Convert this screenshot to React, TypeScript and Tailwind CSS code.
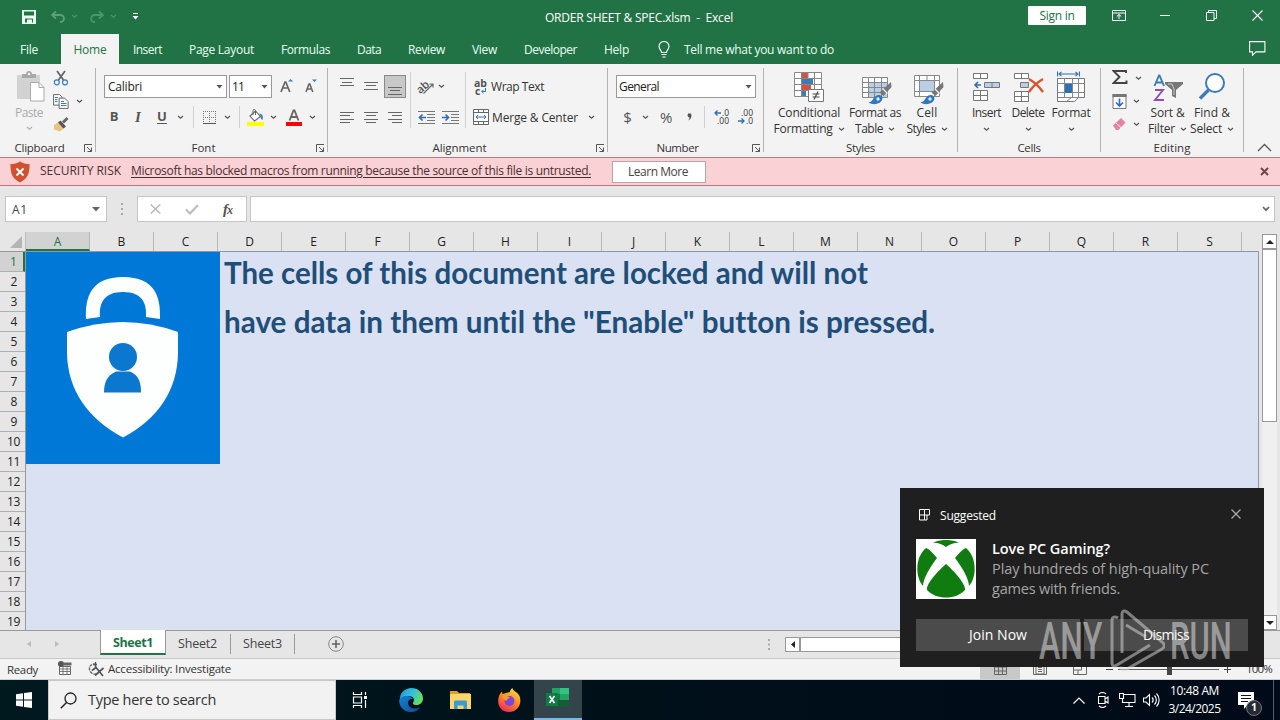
import React, { useLayoutEffect, useRef } from "react";

type TextProps = { w: number; className?: string; children: string };

/** Text set to a fixed width by adjusting its letter spacing. */
function T({ w, className = "", children }: TextProps) {
  const ref = useRef<HTMLSpanElement>(null);
  useLayoutEffect(() => {
    const el = ref.current;
    if (!el) return;
    el.style.letterSpacing = "0px";
    const natural = el.getBoundingClientRect().width;
    el.style.letterSpacing = `${(w - natural) / children.length}px`;
  }, [w, children]);
  return (
    <span ref={ref} className={`inline-block shrink-0 whitespace-pre ${className}`}>
      {children}
    </span>
  );
}

/** Text squeezed horizontally into a fixed width. */
function Squeezed({ w, className = "", children }: TextProps) {
  const ref = useRef<HTMLSpanElement>(null);
  useLayoutEffect(() => {
    const el = ref.current;
    if (!el) return;
    el.style.transform = `scaleX(${w / el.offsetWidth})`;
  }, [w, children]);
  return (
    <span ref={ref} className={`inline-block origin-left whitespace-pre [font-variant-ligatures:none] ${className}`}>
      {children}
    </span>
  );
}

type IconProps = { w: number; h: number; className?: string; children: React.ReactNode };
function Icon({ w, h, className = "", children }: IconProps) {
  return (
    <svg width={w} height={h} viewBox={`0 0 ${w} ${h}`} fill="none" className={`block shrink-0 ${className}`}>
      {children}
    </svg>
  );
}

function Chev({ className = "text-[#555]" }: { className?: string }) {
  return (
    <Icon w={7} h={5} className={className}>
      <path d="M1 1l2.5 2.3L6 1" stroke="currentColor" strokeWidth="1.2" />
    </Icon>
  );
}

function Down() {
  return (
    <Icon w={7} h={4}>
      <path d="M0.5 0h6l-3 3.6z" fill="#555" />
    </Icon>
  );
}

function Launcher() {
  return (
    <Icon w={9} h={9}>
      <path d="M.5 8V.5H8M3 3l4.500 4.500M7.500 3.500v4h-4" stroke="#555" />
    </Icon>
  );
}

function Cell({ className, children }: { className: string; children?: React.ReactNode }) {
  return <div className={`flex shrink-0 items-center justify-center ${className}`}>{children}</div>;
}

function Sep({ className = "h-[22px]" }: { className?: string }) {
  return <div className={`w-px shrink-0 bg-[#d0d0d0] ${className}`} />;
}

function Group({ className, label, labelWidth, launcher, children }: { className: string; label: string; labelWidth: number; launcher?: boolean; children: React.ReactNode }) {
  return (
    <section className={`flex shrink-0 ${className}`}>
      <div className="flex min-w-0 flex-1 flex-col">
        <div className="h-[76px]">{children}</div>
        <div className="flex h-[16px] items-center">
          <div className={`flex flex-1 justify-center ${launcher ? "pr-[5px]" : ""}`}>
            <T w={labelWidth} className="text-[11.5px] text-[#333]">{label}</T>
          </div>
          {launcher && <div className="mr-[2px] w-[9px]"><Launcher /></div>}
        </div>
      </div>
      <div className="mt-[4px] h-[84px] w-px bg-[#b4b4b4]" />
    </section>
  );
}

function TitleBar() {
  return (
    <header className="flex h-[33px] shrink-0 items-center text-white">
      <Icon w={14} h={14} className="ml-[22px]">
        <path d="M0 0h14v14H0zM2 1.5v4h10v-4zM3 8.5v4h2v-3h5v3h1v-4z" fill="#e9fff2" fillRule="evenodd" />
      </Icon>
      <Icon w={14} h={12} className="ml-[15px]">
        <path d="M5 0.5L1 4l4 3.5M1.5 4H9c5.5 0 5 7 0 7" stroke="#5d9f7b" strokeWidth="1.8" />
      </Icon>
      <Chev className="ml-[6px] text-[#4f946e]" />
      <Icon w={14} h={12} className="ml-[12px]">
        <path d="M9 0.5L13 4 9 7.500M12.5 4H5c-5.500 0-5 7 0 7" stroke="#4d946d" strokeWidth="1.8" />
      </Icon>
      <Chev className="ml-[6px] text-[#4f946e]" />
      <Icon w={7} h={7} className="ml-[15px]">
        <path d="M1 .5h5" stroke="#fff" />
        <path d="M.5 3h6l-3 3.500z" fill="#fff" />
      </Icon>
      <div className="mb-[1px] ml-[406px] w-[188px]"><T w={188} className="text-[12px] leading-[16px]">ORDER SHEET &amp; SPEC.xlsm  -  Excel</T></div>
      <div className="mb-[2px] ml-[295px] flex h-[19px] w-[58px] items-center justify-center rounded-[1px] bg-white">
        <T w={35} className="text-[12px] text-[#217346]">Sign in</T>
      </div>
      <Icon w={14} h={11} className="mb-[3px] ml-[26px]">
        <path d="M.5.5h13v10H.5zM.5 3h13M7 9V4.500M4.800 6.500L7 4.400l2.200 2.100" stroke="#fff" />
      </Icon>
      <div className="mb-[3px] ml-[34px] h-px w-[10px] bg-white" />
      <Icon w={11} h={11} className="mb-[2px] ml-[36px]">
        <path d="M.5 2.500h7.500V10.500H.5zM2.500 2.500V.5h8v8H8" stroke="#fff" />
      </Icon>
      <Icon w={11} h={11} className="mb-[3px] ml-[35px]">
        <path d="M.5.5l10 10M10.500.5l-10 10" stroke="#fff" strokeWidth="1.100" />
      </Icon>
    </header>
  );
}

function Tab({ className, w, children }: { className: string; w: number; children: string }) {
  return (
    <div className={`h-[30px] shrink-0 pt-[1px] ${className}`}>
      <T w={w} className="text-[12px] leading-[29px]">{children}</T>
    </div>
  );
}

function Tabs() {
  return (
    <nav className="flex h-[31px] shrink-0 items-end pl-[20px] text-[#e8fff2]">
      <Tab className="w-[41px]" w={18}>File</Tab>
      <div className="flex h-[30px] w-[58px] shrink-0 justify-center bg-[#f3f3f3] pt-[1px] text-[#217346]"><T w={33} className="text-[12px] leading-[29px]">Home</T></div>
      <Tab className="w-[56px] pl-[14px]" w={29}>Insert</Tab>
      <Tab className="w-[92px] pl-[14px]" w={65}>Page Layout</Tab>
      <Tab className="w-[76px] pl-[14px]" w={49}>Formulas</Tab>
      <Tab className="w-[51px] pl-[14px]" w={24}>Data</Tab>
      <Tab className="w-[64px] pl-[14px]" w={37}>Review</Tab>
      <Tab className="w-[52px] pl-[14px]" w={25}>View</Tab>
      <Tab className="w-[80px] pl-[14px]" w={53}>Developer</Tab>
      <Tab className="w-[68px] pl-[14px]" w={25}>Help</Tab>
      <Icon w={12} h={17} className="mb-[6px]">
        <path d="M3.500 11.500C3.500 9 1 8.500 1 5.500a5 5 0 0 1 10 0c0 3-2.500 3.500-2.500 6zM3.500 13.500h5M4.500 16h3" stroke="#fff" strokeWidth="1.100" />
      </Icon>
      <Tab className="ml-[14px]" w={150}>Tell me what you want to do</Tab>
      <Icon w={17} h={15} className="mb-[8px] ml-[415px]">
        <path d="M.6.6h15.300v10.300H7l-3.500 3.300v-3.300H.6z" stroke="#fff" strokeWidth="1.100" />
      </Icon>
    </nav>
  );
}

function Clipboard() {
  return (
    <Group className="w-[96px]" label="Clipboard" labelWidth={50} launcher>
      <div className="flex">
        <div className="ml-[12px] flex w-[34px] flex-col items-center pt-[7px]">
          <Icon w={29} h={31} className="ml-[3px]">
            <path d="M1 4h23v24H1z" fill="#d2d2d2" />
            <path d="M6 3h4c0-4 6-4 6 0h4v4H6z" fill="#a8a8a8" />
            <circle cx="13" cy="3" r="1.200" fill="#f3f3f3" />
            <path d="M14.500 11.500h8.500l5 5V30H14.500z" fill="#fff" stroke="#aaa" />
            <path d="M23 11.500v5h5" stroke="#aaa" />
          </Icon>
          <T w={28} className="mt-[3px] text-[12px] leading-[16px] text-[#aaa]">Paste</T>
          <div className="mt-[5px]"><Chev className="text-[#b0b0b0]" /></div>
        </div>
        <div className="ml-[7px] w-[16px] pt-[6px]">
          <Icon w={16} h={16}>
            <path d="M4 1l6.500 9M12 1L5.500 10" stroke="#666" strokeWidth="1.800" />
            <circle cx="3.800" cy="12.300" r="2.500" stroke="#3c7ab8" strokeWidth="1.200" />
            <circle cx="12" cy="12.300" r="2.500" stroke="#3c7ab8" strokeWidth="1.200" />
          </Icon>
          <Icon w={16} h={15} className="mt-[8px]">
            <path d="M.6.6h6l2.500 2.500v8H.6z" fill="#fff" stroke="#666" />
            <path d="M6.100 4.100h5.500l3.500 3.500v6.800h-9z" fill="#fff" stroke="#666" />
            <path d="M2 3.500h3M2 5.500h2.500M2 7.500h2.500M8 7.500h3M8 9.500h5.500M8 11.500h5.500" stroke="#3c7ab8" />
          </Icon>
          <Icon w={16} h={15} className="mt-[8px]">
            <path d="M1 8l5-3 5 6-4 3.500-6-2z" fill="#eac282" />
            <path d="M5 5.500l2.500-2 5.500 6-2.500 2z" fill="#555" />
            <path d="M10 5.500L14.500 1" stroke="#666" strokeWidth="2.800" />
          </Icon>
        </div>
        <div className="ml-[7px] pt-[35px]"><Chev /></div>
      </div>
    </Group>
  );
}

function FontGroup() {
  return (
    <Group className="w-[232px]" label="Font" labelWidth={24} launcher>
      <div className="flex pl-[8px] pt-[11px]">
        <div className="flex h-[23px] w-[123px] items-center justify-between border border-[#999] bg-white pl-[3px] pr-[3px] text-[#222]">
          <T w={34} className="text-[12px]">Calibri</T><Down />
        </div>
        <div className="ml-[2px] flex h-[23px] w-[43px] items-center justify-between border border-[#999] bg-white pl-[2px] pr-[3px] text-[#222]">
          <T w={12} className="text-[12px]">11</T><Down />
        </div>
        <Icon w={14} h={16} className="ml-[8px] mt-[3px]">
          <path d="M1 14L5 4h.8l4 10M2.600 10h5.800" stroke="#666" strokeWidth="1.700" />
          <path d="M8 3.500L10.600 1l2.600 2.500z" fill="#3c7ab8" />
        </Icon>
        <Icon w={14} h={16} className="ml-[11px] mt-[3px]">
          <path d="M1 14l3-8h.8l3 8M2.200 11h4.500" stroke="#666" strokeWidth="1.600" />
          <path d="M7 1.500h5L9.500 4z" fill="#3c7ab8" />
        </Icon>
      </div>
      <div className="mt-[8px] flex h-[22px] items-center pl-[8px] text-[#555]">
        <Cell className="w-[20px] text-[13px] font-bold">B</Cell>
        <Cell className="w-[28px] font-['Liberation_Serif',serif] text-[15px] font-bold italic">I</Cell>
        <Cell className="w-[20px] text-[13px] font-bold underline underline-offset-2">U</Cell>
        <Cell className="w-[17px]"><Chev /></Cell>
        <Cell className="w-[9px]"><Sep /></Cell>
        <Cell className="w-[22px]">
          <Icon w={13} h={13}>
            <path d="M.5 0v12M6.500 0v12M12.500 0v12M0 .5h13M0 6.500h13" stroke="#777" strokeDasharray="1 1" />
            <path d="M0 12.500h13" stroke="#555" />
          </Icon>
        </Cell>
        <Cell className="w-[14px]"><Chev /></Cell>
        <Cell className="w-[11px]"><Sep /></Cell>
        <Cell className="w-[22px] pr-[2px]">
          <Icon w={17} h={17}>
            <path d="M3 7l5.500-5 5 5.500L7.500 12z" fill="#fff" stroke="#666" strokeWidth="1.100" />
            <path d="M6 6V1.500c0-1.500 2.500-1.500 2.500 0V6" stroke="#666" />
            <path d="M12.500 4.500c3 .5 4 3 3 6.500-1.500-1-2-2-2-4z" fill="#3c7ab8" />
            <path d="M0 13h17v4H0z" fill="#ffff00" />
          </Icon>
        </Cell>
        <Cell className="w-[13px]"><Chev /></Cell>
        <Cell className="w-[26px] pl-[2px]">
          <Icon w={16} h={17}>
            <path d="M3.500 11.500L7.500 1.500h1l4 10M5 8h6" stroke="#666" strokeWidth="1.800" />
            <path d="M0 13h16v4H0z" fill="#f00" />
          </Icon>
        </Cell>
        <Cell className="w-[12px]"><Chev /></Cell>
      </div>
    </Group>
  );
}

function Alignment() {
  return (
    <Group className="w-[280px]" label="Alignment" labelWidth={54} launcher>
      <div className="flex">
        <div className="w-[82px] pt-[11px]">
          <div className="flex h-[23px] pl-[7px]">
            <Cell className="w-[24px]"><Icon w={14} h={23}><path d="M0 3.500h14M2 7.500h10M0 10.500h14" stroke="#666" /></Icon></Cell>
            <Cell className="w-[24px]"><Icon w={14} h={23}><path d="M0 7.500h14M2 10.500h10M0 14.500h14" stroke="#666" /></Icon></Cell>
            <Cell className="ml-px w-[22px] border border-[#8a8a8a] bg-[#c8c8c8]"><Icon w={14} h={21}><path d="M0 11.500h14M2 14.500h10M0 18.500h14" stroke="#666" /></Icon></Cell>
          </div>
          <div className="mt-[8px] flex h-[22px] pl-[7px]">
            <Cell className="w-[24px]"><Icon w={14} h={11}><path d="M0 .5h14M0 3.500h10M0 7.500h14M0 10.500h10" stroke="#666" /></Icon></Cell>
            <Cell className="w-[24px]"><Icon w={14} h={11}><path d="M0 .5h14M2 3.500h10M0 7.500h14M2 10.500h10" stroke="#666" /></Icon></Cell>
            <Cell className="w-[24px]"><Icon w={14} h={11}><path d="M0 .5h14M4 3.500h10M0 7.500h14M4 10.500h10" stroke="#666" /></Icon></Cell>
          </div>
        </div>
        <div className="pt-[8px]"><Sep className="h-[56px]" /></div>
        <div className="w-[54px] pt-[11px]">
          <div className="flex h-[23px] items-center pl-[7px]">
            <Icon w={17} h={16} className="overflow-visible">
              <text x="-1" y="11" transform="rotate(-42 6 9)" fill="#555" className="text-[11px] font-semibold">ab</text>
              <path d="M5.500 14.500L15 5M11.500 5H15v3.500" stroke="#666" strokeWidth="1.200" />
            </Icon>
            <div className="ml-[3px]"><Chev /></div>
          </div>
          <div className="mt-[8px] flex h-[22px] items-center pl-[7px]">
            <Icon w={17} h={13}>
              <path d="M0 .5h17M9 3.500h8M9 6.500h8M9 9.500h8M0 12.500h17" stroke="#777" />
              <path d="M8 6.500H1.500M4.500 3.500l-3 3 3 3" stroke="#2f6fb3" strokeWidth="1.700" />
            </Icon>
            <Icon w={17} h={13} className="ml-[7px]">
              <path d="M0 .5h17M9 3.500h8M9 6.500h8M9 9.500h8M0 12.500h17" stroke="#777" />
              <path d="M0 6.500h6.500M3.500 3.500l3 3-3 3" stroke="#2f6fb3" strokeWidth="1.700" />
            </Icon>
          </div>
        </div>
        <div className="pt-[8px]"><Sep className="h-[56px]" /></div>
        <div className="pl-[7px] pt-[11px] text-[#333]">
          <div className="flex h-[23px] items-center">
            <div className="ml-[1px] flex w-[14px] flex-col text-[10.5px] font-bold leading-[8px] text-[#555]">
              <span>ab</span>
              <span className="flex items-center gap-[1px] pl-px">c<Icon w={5} h={6}><path d="M4.500 0v3.500H.8M2.500 1.800L.8 3.500l1.700 1.700" stroke="#2f6fb3" /></Icon></span>
            </div>
            <T w={53} className="ml-[3px] text-[12px]">Wrap Text</T>
          </div>
          <div className="mt-[8px] flex h-[22px] items-center">
            <Icon w={16} h={16}>
              <path d="M.5.5h15v15H.5z" fill="#fff" stroke="#666" />
              <path d="M.5 3.500h15M.5 12.500h15M5.500.5v3M10.500.5v3M5.500 12.500v3M10.500 12.500v3" stroke="#666" />
              <path d="M3 8h10M5 6L3 8l2 2M11 6l2 2-2 2" stroke="#2f6fb3" />
            </Icon>
            <T w={86} className="ml-[3px] mt-[2px] text-[12px]">Merge &amp; Center</T>
            <div className="ml-[10px]"><Chev /></div>
          </div>
        </div>
      </div>
    </Group>
  );
}

function NumberGroup() {
  return (
    <Group className="w-[156px]" label="Number" labelWidth={42} launcher>
      <div className="ml-[8px] flex pt-[11px]">
        <div className="flex h-[23px] w-[140px] items-center justify-between border border-[#999] bg-white pl-[2px] pr-[3px] text-[#222]">
          <T w={40} className="text-[12px]">General</T><Down />
        </div>
      </div>
      <div className="mt-[8px] flex h-[22px] items-center pl-[8px] text-[#555]">
        <Cell className="w-[23px] text-[15px]">$</Cell>
        <Cell className="w-[14px] pr-[2px]"><Chev /></Cell>
        <Cell className="w-[27px] text-[15px]"><T w={13}>%</T></Cell>
        <Cell className="w-[19px]">
          <Icon w={5} h={8}><path d="M.5 2.300a2 2 0 1 1 4 0C4.500 5 3 7 1 7.600c1-1.200 1.500-2 1.500-3C1.500 4.600.5 3.500.5 2.300z" fill="#555" /></Icon>
        </Cell>
        <Cell className="w-[11px]"><Sep /></Cell>
        <div className="ml-[3px] flex w-[16px] shrink-0 flex-col items-end text-[8.5px] leading-[8px] text-[#333]">
          <span className="flex items-center gap-px"><Icon w={7} h={6}><path d="M7 3H1M3.500.5L1 3l2.500 2.500" stroke="#2f6fb3" strokeWidth="1.300" /></Icon>.0</span>
          <span>.00</span>
        </div>
        <div className="ml-[8px] flex w-[16px] shrink-0 flex-col items-end text-[8.5px] leading-[8px] text-[#333]">
          <span>.00</span>
          <span className="flex items-center gap-px"><Icon w={7} h={6}><path d="M0 3h6M3.500.5L6 3 3.500 5.500" stroke="#2f6fb3" strokeWidth="1.300" /></Icon>.0</span>
        </div>
      </div>
    </Group>
  );
}

function Big({ className, icon, a, aw, b, bw }: { className: string; icon: React.ReactNode; a: string; aw: number; b?: string; bw?: number }) {
  return (
    <div className={`flex shrink-0 flex-col items-center text-[#333] ${className}`}>
      <div className="flex h-[40px] items-end">{icon}</div>
      <T w={aw} className="text-[12px] leading-[16px]">{a}</T>
      <div className="flex h-[16px] items-center gap-[5px]">
        {b && bw && <T w={bw} className="text-[12px] leading-[16px]">{b}</T>}
        <Chev />
      </div>
    </div>
  );
}

function BrushMark() {
  return (
    <>
      <path d="M29 8l.5 5-8 9-4-3.500z" fill="#777" />
      <path d="M21 15l4.500 4.500" stroke="#f3f3f3" strokeWidth="1.200" />
      <path d="M6.500 28.500c5-.5 5-8 11-7.500 4 1 3.500 5 1 7-3 2.500-8 3-12 .5z" fill="#2f78bd" />
      <circle cx="16" cy="25" r="1.700" fill="#dcebf8" />
    </>
  );
}

function Styles() {
  return (
    <Group className="w-[194px]" label="Styles" labelWidth={29}>
      <div className="flex pl-[8px] pt-[1px]">
        <Big className="w-[74px]" a="Conditional" aw={62} b="Formatting" bw={59} icon={
          <Icon w={30} h={31} className="mb-[2px]">
            <path d="M.5.5h27v25H.5z" fill="#fff" />
            <path d="M8 1h6v6H8zM8 13h9v6H8z" fill="#d6503f" />
            <path d="M8 7h11v6H8zM8 19h4v6H8z" fill="#3c7ab8" />
            <path d="M.5.5h27v24H.5zM.5 6.500h27M.5 12.500h27M.5 18.500h27M7.500.5v24M20.500.5v24M14 .5v6" stroke="#888" />
            <path d="M14.500 17.500h15v12h-15z" fill="#fff" stroke="#777" />
            <path d="M18.500 22h7M18.500 25h7M24 19.500l-4 8" stroke="#444" strokeWidth="1.200" />
          </Icon>} />
        <Big className="w-[58px]" a="Format as" aw={52} b="Table" bw={28} icon={
          <Icon w={30} h={31} className="ml-[3px]">
            <path d="M.5 3.500h25v20H.5z" fill="#fff" />
            <path d="M7 8h18v15H7z" fill="#b9cfe6" />
            <path d="M.5 3.500h25v20H.5zM.5 8.500h25M.5 13.500h25M.5 18.500h25M6.500 3.500v20M12.500 3.500v20M19.500 3.500v20" stroke="#888" />
            <BrushMark />
          </Icon>} />
        <Big className="w-[46px]" a="Cell" aw={21} b="Styles" bw={29} icon={
          <Icon w={30} h={31} className="ml-[4px]">
            <path d="M.5 1.500h25v21H.5z" fill="#fff" />
            <path d="M5 7h16v10H5z" fill="#b9cfe6" />
            <path d="M.5 1.500h25v21H.5zM.5 6.500h25M.5 17.500h25M5.500 1.500v21M20.500 1.500v21M13 1.500v5" stroke="#888" />
            <BrushMark />
          </Icon>} />
      </div>
    </Group>
  );
}

function Cells() {
  return (
    <Group className="w-[143px]" label="Cells" labelWidth={23}>
      <div className="flex pl-[9px] pt-[1px]">
        <Big className="w-[39px]" a="Insert" aw={29} icon={
          <Icon w={27} h={29} className="mb-[3px]">
            <path d="M.5.5h14v5H.5zM7.500.5v5M.5 17.500h14v10H.5zM7.500 17.500v10M.5 22.500h14" fill="#fff" stroke="#777" />
            <path d="M11.500 9.500h15v5h-15zM19 9.500v5" fill="#b9cfe6" stroke="#777" />
            <path d="M8 12H2M5 9l-3 3 3 3" stroke="#2f6fb3" strokeWidth="1.600" />
          </Icon>} />
        <Big className="w-[44px]" a="Delete" aw={33} icon={
          <Icon w={31} h={30} className="mb-[2px] ml-[3px]">
            <path d="M.5.5h14v5H.5zM7.500.5v5M.5 18.500h14v10H.5zM7.500 18.500v10M.5 23.500h14" fill="#fff" stroke="#777" />
            <path d="M6.500 9.500h8v5h-8z" fill="#b9cfe6" stroke="#777" />
            <path d="M15 6c5 3 9 6 14 13M29 6c-5 3-10 7-14 13" stroke="#d9532f" strokeWidth="2.400" />
          </Icon>} />
        <Big className="w-[42px]" a="Format" aw={39} icon={
          <Icon w={29} h={32} className="mb-[2px]">
            <path d="M.5.5v5M22.500.5v5M2 3h19M4.500.8L2 3l2.500 2.200M18.500.8L21 3l-2.500 2.200" stroke="#2f6fb3" strokeWidth="1.100" />
            <path d="M.5 7.500h27v19h-6l-4 4H.5z" fill="#fff" stroke="#777" />
            <path d="M.5 12.500h27M.5 21.500h27M7.500 7.500v19M15.500 7.500v19M21.500 7.500v19M1 26.500h20M10 30l4-3" stroke="#888" />
            <path d="M8 13h7v9H8z" fill="#2f6fb3" />
          </Icon>} />
      </div>
    </Group>
  );
}

function Editing() {
  return (
    <Group className="w-[143px]" label="Editing" labelWidth={37}>
      <div className="flex pl-[11px] pt-[1px]">
        <div className="w-[32px] pt-[5px]">
          <div className="flex items-center"><Icon w={16} h={14}><path d="M14 3V1H1.500l6 6-6 6H14.500v-2.500" stroke="#444" strokeWidth="1.900" /></Icon><div className="ml-[7px] mt-[2px]"><Chev /></div></div>
          <div className="mt-[10px] flex items-center"><Icon w={15} h={15}><path d="M1 .5h13v14H1z" fill="#fff" stroke="#777" /><path d="M.5 0h14v3H.5z" fill="#777" /><path d="M7.500 4.500v7M4 8.500l3.500 3.500L11 8.500" stroke="#2f6fb3" strokeWidth="1.700" /></Icon><div className="ml-[6px]"><Chev /></div></div>
          <div className="mt-[7px] flex items-center"><Icon w={15} h={15}><path d="M1 9.500L9 2l4.500 4.500L6.500 14H4z" fill="#e2849d" /><path d="M4 7l5 4.500" stroke="#f3f3f3" /></Icon><div className="ml-[6px] mt-[2px]"><Chev /></div></div>
        </div>
        <Big className="w-[47px]" a="Sort &amp;" aw={34} b="Filter" bw={27} icon={<SortIcon />} />
        <Big className="w-[42px]" a="Find &amp;" aw={36} b="Select" bw={32} icon={
          <Icon w={28} h={28} className="mb-[4px]">
            <circle cx="17" cy="10" r="9" fill="#fff" stroke="#3c7ab8" strokeWidth="2" />
            <path d="M10.500 17L2 25.500" stroke="#3c7ab8" strokeWidth="3.400" />
          </Icon>} />
      </div>
    </Group>
  );
}

function SortIcon() {
  return (
    <Icon w={30} h={28} className="mb-[3px]">
      <path d="M1.500 12L6 1.500h.5L11 12M3 8.500h6.500" stroke="#3c7ab8" strokeWidth="1.900" />
      <path d="M2 16h8L2 26h9" stroke="#8f4fb0" strokeWidth="1.900" />
      <path d="M12 8h18v2l-7 6v8l-4-2v-6l-7-6z" fill="#777" />
      <path d="M15 10h4l2 5v6" stroke="#ccc" />
    </Icon>
  );
}

function SecurityBar() {
  return (
    <div className="flex h-[29px] shrink-0 items-center border-y border-t-[#b87c80] border-b-[#d0707a] bg-[#fad1d4] text-[#4a2f31]">
      <Icon w={20} h={22} className="ml-[10px]">
        <path d="M10 .5c3 2 6 2.500 9.500 2.500 0 9-1 14-9.500 18.500C1.500 17 .5 12 .5 3 4 3 7 2.500 10 .5z" fill="#d1502f" />
        <path d="M6.500 7.500l7 7M13.500 7.500l-7 7" stroke="#fff" strokeWidth="2" />
      </Icon>
      <div className="mb-[1px] ml-[10px] flex w-[91px]"><T w={81} className="text-[12px] leading-[16px]">SECURITY RISK</T></div>
      <div className="mb-[1px] flex w-[481px]"><T w={460} className="text-[12px] leading-[16px] underline underline-offset-2">Microsoft has blocked macros from running because the source of this file is untrusted.</T></div>
      <div className="flex h-[22px] w-[94px] items-center justify-center border border-[#b9a5a7] bg-white pr-[2px]"><T w={60} className="text-[12px] text-[#444]">Learn More</T></div>
      <Icon w={9} h={9} className="ml-[554px]"><path d="M1 1l7 7M8 1L1 8" stroke="#6b4a4d" strokeWidth="2" /></Icon>
    </div>
  );
}

function FormulaBar() {
  return (
    <div className="flex h-[46px] shrink-0 items-center bg-[#e6e6e6] pl-[5px]">
      <div className="flex h-[26px] w-[102px] items-center justify-between border border-[#c6c6c6] bg-white pl-[6px] pr-[6px] text-[#444]">
        <T w={16} className="mt-[2px] text-[12px]">A1</T>
        <Icon w={8} h={5}><path d="M0 0h8L4 4.500z" fill="#666" /></Icon>
      </div>
      <Icon w={2} h={12} className="ml-[14px]"><path d="M0 0h2v2H0zM0 5h2v2H0zM0 10h2v2H0z" fill="#aaa" /></Icon>
      <div className="ml-[14px] flex h-[26px] w-[110px] items-center border border-[#c6c6c6] bg-white pl-[12px]">
        <Icon w={11} h={10}><path d="M.8.5l9.500 9M10.200.5L.8 9.500" stroke="#bbb" strokeWidth="1.600" /></Icon>
        <Icon w={14} h={11} className="ml-[24px]"><path d="M1 5.500L5 9.500 13 1" stroke="#bbb" strokeWidth="2" /></Icon>
        <span className="ml-[24px] w-[14px] font-['Liberation_Serif',serif] text-[15px] font-bold italic leading-[18px] tracking-[-1px] text-[#555]">f<span className="text-[12px]">x</span></span>
      </div>
      <div className="ml-[3px] flex h-[26px] w-[1025px] items-center justify-end border border-[#c6c6c6] bg-white pr-[4px]">
        <Icon w={8} h={6}><path d="M1 1l3 3.200L7 1" stroke="#666" strokeWidth="1.800" /></Icon>
      </div>
    </div>
  );
}

const columns = "ABCDEFGHIJKLMNOPQRS".split("");
const rows = Array.from({ length: 19 }, (_, i) => i + 1);

function LockPicture() {
  return (
    <Icon w={194} h={212}>
      <path d="M0 0h194v212H0z" fill="#0078d7" />
      <path d="M60 67C59 45 65 25 97 25s38 20 37 42l-14-2c1-14-4-25-23-25S73 51 74 65z" fill="#fdfefe" />
      <path d="M41 80Q97 60 152 80v20C152 138 131 168 97 185.500 63 168 41 138 41 100z" fill="#fdfefe" />
      <circle cx="97" cy="105" r="14" fill="#0b77cf" />
      <path d="M78 140.500c0-10 3-17 12-21h14c9 4 11 11 11 21z" fill="#0b77cf" />
    </Icon>
  );
}

function Sheet() {
  return (
    <div className="flex h-[398px] shrink-0 bg-[#e6e6e6]">
      <div className="flex w-[1259px] shrink-0 flex-col">
        <div className="flex h-[19px] shrink-0">
          <div className="flex w-[26px] shrink-0 items-end justify-end border-r border-[#bbb] pb-[3px] pr-[3px]">
            <Icon w={12} h={12}><path d="M12 0v12H0z" fill="#b4b4b4" /></Icon>
          </div>
          {columns.map((c) => (
            <div key={c} className={`flex w-[64px] shrink-0 items-center justify-center border-r border-[#b8b8b8] text-[12px] leading-[18px] ${c === "A" ? "border-b-2 border-b-[#217346] bg-[#d2d2d2] pt-[2px] text-[#217346]" : "text-[#222]"}`}>{c}</div>
          ))}
        </div>
        <div className="flex h-[379px] overflow-hidden">
          <div className="w-[26px] shrink-0 overflow-hidden border-t border-r border-[#999]">
            {rows.map((r) => (
              <div key={r} className={`flex h-[20px] items-center justify-center border-b border-[#b0b0b0] pt-[1px] text-[12px] leading-[18px] ${r === 1 ? "border-r-2 border-r-[#217346] bg-[#d2d2d2] pl-[3px] text-[#217346]" : "pl-[2px] text-[#222]"}`}><T w={r > 9 ? 13 : 6}>{String(r)}</T></div>
            ))}
          </div>
          <div className="flex flex-1 border-t border-r border-[#8f97a8] bg-[#d9e1f2]">
            <div><LockPicture /></div>
            <div className="w-[720px] pl-[4px] pt-px font-[Lato,sans-serif] text-[29.5px] font-bold leading-[40px] text-[#1f4e79]">
              <Squeezed w={644}>The cells of this document are locked and will not</Squeezed>
              <div className="mt-[9px]"><Squeezed w={711}>have data in them until the "Enable" button is pressed.</Squeezed></div>
            </div>
          </div>
        </div>
      </div>
      <div className="ml-[3px] mt-[2px] flex h-[396px] w-[15px] flex-col bg-[#f0f0f0]">
        <div className="flex h-[15px] items-center justify-center border border-[#999] bg-white"><Icon w={8} h={4}><path d="M0 4h8L4 0z" fill="#222" /></Icon></div>
        <div className="h-[173px] border border-[#999] bg-white" />
        <div className="mt-auto flex h-[15px] items-center justify-center border border-[#999] bg-white"><Icon w={8} h={4}><path d="M0 0h8L4 4z" fill="#222" /></Icon></div>
      </div>
    </div>
  );
}

function SheetTabs() {
  return (
    <div className="flex h-[29px] shrink-0 border-b border-[#c8c8c8] bg-[#e6e6e6] text-[#444]">
      <div className="flex w-[100px] shrink-0 items-center gap-[24px] border-t border-[#999] pb-[1px] pl-[27px]">
        <Icon w={4} h={6}><path d="M4 0v6L0 3z" fill="#bbb" /></Icon>
        <Icon w={4} h={6}><path d="M0 0v6l4-3z" fill="#bbb" /></Icon>
      </div>
      <div className="flex h-[25px] w-[66px] shrink-0 items-center justify-center border-x border-b-2 border-x-[#999] border-b-[#217346] bg-white pt-[3px] text-[#217346]"><T w={40} className="text-[12.5px] font-bold">Sheet1</T></div>
      <div className="flex flex-1 items-center border-t border-[#999] pb-[1px]">
        <div className="flex h-[20px] w-[65px] items-center justify-center border-r border-[#999] pr-px"><T w={39} className="text-[12.5px]">Sheet2</T></div>
        <div className="flex h-[20px] w-[64px] items-center justify-center border-r border-[#999]"><T w={39} className="text-[12.5px]">Sheet3</T></div>
        <Icon w={16} h={16} className="ml-[33px]"><circle cx="8" cy="8" r="7.300" stroke="#888" /><path d="M8 4v8M4 8h8" stroke="#666" strokeWidth="1.600" /></Icon>
        <Icon w={2} h={11} className="ml-[424px]"><path d="M0 0h2v2H0zM0 4.500h2v2H0zM0 9h2v2H0z" fill="#aaa" /></Icon>
        <div className="ml-[15px] flex h-[15px] w-[15px] items-center justify-center border border-[#999] bg-white"><Icon w={4} h={7}><path d="M4 0v7L0 3.500z" fill="#222" /></Icon></div>
        <div className="h-[15px] w-[300px] border border-[#999] bg-white" />
      </div>
    </div>
  );
}

function StatusBar() {
  return (
    <div className="flex h-[21px] shrink-0 items-center border-b border-[#d0d0d0] bg-[#f3f3f3] text-[11.5px] leading-[16px] text-[#333]">
      <div className="ml-[7px] mt-[2px] flex w-[51px]"><T w={31}>Ready</T></div>
      <Icon w={14} h={14} className="mb-[2px]">
        <path d="M1.500 5.500h11v8h-11z" fill="#fff" stroke="#666" />
        <path d="M6 1.500h7.500v3H6z" fill="#666" /><circle cx="3" cy="3" r="3" fill="#555" />
        <path d="M1.500 8h11M1.500 10.500h11M5 5.500v8M9 5.500v8" stroke="#777" />
      </Icon>
      <Icon w={17} h={15} className="ml-[16px]">
        <path d="M8 2.500C3 1 0 5 2 9c1 2.500 4 3.500 6 3" stroke="#666" strokeWidth="1.400" strokeDasharray="3 1" />
        <path d="M7.500 0v5M5 2.500h4" stroke="#555" strokeWidth="1.400" />
        <path d="M4 8.500l4-3 7 8.500M15.500 6L7 13.500" stroke="#555" strokeWidth="1.700" />
      </Icon>
      <T w={123} className="ml-[3px]">Accessibility: Investigate</T>
      <div className="ml-[749px] flex h-full w-[40px] items-center justify-center bg-[#c8c8c8]"><Icon w={13} h={12}><path d="M.5.5h12v11H.5zM.5 4h12M.5 8h12M4.500.5v11M8.500.5v11" stroke="#666" /></Icon></div>
      <Icon w={14} h={12} className="ml-[13px]"><path d="M.5.5h13v11H.5zM3 2h8v9H3zM5 4.500h4M5 6.500h4M5 8.500h4" stroke="#666" /></Icon>
      <Icon w={14} h={12} className="ml-[26px]"><path d="M.5.5h13v11H.5zM.5 7h8V.5M5 7v4" stroke="#666" /></Icon>
      <div className="ml-[19px] h-px w-[7px] bg-[#444]" />
      <div className="ml-[5px] flex w-[101px] items-center"><div className="h-px w-[49px] bg-[#666]" /><div className="h-[12px] w-[5px] bg-[#444]" /><div className="h-px flex-1 bg-[#666]" /></div>
      <Icon w={7} h={7} className="ml-[5px]"><path d="M0 3.500h7M3.500 0v7" stroke="#444" /></Icon>
      <T w={26} className="ml-[15px]">100%</T>
    </div>
  );
}

function Toast() {
  return (
    <aside className="absolute left-[900px] top-[488px] flex h-[179px] w-[364px] flex-col bg-[#1f1f1f] px-[16px] text-white">
      <div className="flex h-[51px] items-center pt-[3px]">
        <Icon w={12} h={12} className="ml-[3px]"><path d="M.5.5h10v5.500H.5zM.5 6v5h5V.5M5.500 11H8V6" stroke="#fff" /></Icon>
        <T w={56} className="ml-[9px] mt-px text-[12px]">Suggested</T>
        <Icon w={10} h={10} className="mb-[2px] ml-[235px]"><path d="M.5.5l9 9M9.500.5l-9 9" stroke="#aaa" strokeWidth="1.200" /></Icon>
      </div>
      <div className="flex h-[80px]">
        <Icon w={60} h={60}>
          <path d="M0 0h60v60H0z" fill="#fff" />
          <path d="M17 4C22 0 38 0 43 4 38 3 33 6 30 8 27 6 22 3 17 4zM10 9C-1 18-1 38 7 47 7 40 14 28 21 19 17 14 13 10 10 9zM50 9c11 9 11 29 3 38 0-7-7-19-14-28 4-5 8-9 11-10zM30 25C22 32 10 45 11 51c9 10 29 10 38 0 1-6-11-19-19-26z" fill="#107c10" />
        </Icon>
        <div className="ml-[16px] flex flex-col text-[14.5px] leading-[20px] text-[#a6a6a6]">
          <T w={118} className="self-start font-semibold text-white">Love PC Gaming?</T>
          <T w={217} className="self-start">Play hundreds of high-quality PC</T>
          <T w={128} className="self-start">games with friends.</T>
        </div>
      </div>
      <div className="flex gap-[4px] text-[14px]">
        <div className="flex h-[32px] w-[164px] items-center justify-center bg-[#4b4b4b] pb-px"><T w={58}>Join Now</T></div>
        <div className="flex h-[32px] w-[164px] items-center justify-center bg-[#4b4b4b] pb-px"><T w={46}>Dismiss</T></div>
      </div>
    </aside>
  );
}

function Watermark() {
  return (
    <div className="absolute left-[1039px] top-[609px] flex h-[64px] w-[193px] items-center font-[Roboto,sans-serif] text-[52px] font-medium leading-[64px] text-[#e8e8e8] opacity-50">
      <div className="w-[68px] shrink-0 pt-px"><Squeezed w={63}>ANY</Squeezed></div>
      <Icon w={58} h={64}>
        <path d="M11 9C8 7 5 8 5 11v43c0 3 2 4 5 2l33-20M15 44V5c0-3 2-4 5-2l35 30c3 2 3 5 0 7L20 60c-3 2-5 1-7-2M19 16l20 12" stroke="#ddd" strokeWidth="3" />
      </Icon>
      <div className="ml-[5px] w-[60px] shrink-0 pt-px"><Squeezed w={62}>RUN</Squeezed></div>
    </div>
  );
}

function Taskbar() {
  return (
    <footer className="flex h-[40px] shrink-0 items-center bg-gradient-to-r from-[#00191f] via-[#001019] to-[#000a18] text-white">
      <Cell className="h-full w-[48px]">
        <Icon w={16} h={16}><path d="M0 2.300L7 1.300v6.200H0zM8 1.100L16 0v7.500H8zM0 8.500h7v6.200L0 13.700zM8 8.500h8V16l-8-1.100z" fill="#fff" /></Icon>
      </Cell>
      <div className="flex h-full w-[288px] items-center border border-[#c8c8c8] bg-[#f2f2f2] text-[#333]">
        <Icon w={17} h={17} className="ml-[11px]"><circle cx="10.500" cy="6.500" r="5.500" stroke="#222" strokeWidth="1.300" /><path d="M6.500 10.500L.8 16.200" stroke="#222" strokeWidth="1.500" /></Icon>
        <T w={128} className="ml-[11px] text-[14.5px]">Type here to search</T>
      </div>
      <Cell className="w-[48px]">
        <Icon w={16} h={16}><path d="M1.500 0v2.500h8V0M1.500 16v-2.500h8V16M1.500 5h8v6h-8zM13.500 0v3M13.500 8v8" stroke="#fff" strokeWidth="1.200" /><path d="M12 4h3v3h-3z" fill="#fff" /></Icon>
      </Cell>
      <Cell className="w-[54px]">
        <Icon w={24} h={24}>
          <defs>
            <linearGradient id="edgeTop" x1="0" y1="0" x2="1" y2=".4"><stop stopColor="#1a9be0" /><stop offset=".6" stopColor="#35c1d8" /><stop offset="1" stopColor="#66dc62" /></linearGradient>
            <linearGradient id="edgeLow" x1="0" y1="0" x2="1" y2="1"><stop stopColor="#1583d6" /><stop offset="1" stopColor="#0d4a94" /></linearGradient>
          </defs>
          <path d="M1 13C0 5 6 0 12.500 0 19 0 24 5 24 10.500c0 4-3 6.500-6.500 6.500-3 0-4.500-1-3-3 1.500-3-.5-6-5-6-4 0-7.500 2-8.500 5z" fill="url(#edgeTop)" />
          <path d="M.3 12C1 9 5 7.500 9 8c2.500.3 4 1.500 4.500 3-2-.5-4.500 1-4.500 4 0 3.500 4 6 8 5.500 2-.3 3.500-1 4.500-1.500-2 3-5.500 5-9.500 5C5 24-.5 18 .3 12z" fill="url(#edgeLow)" />
        </Icon>
      </Cell>
      <Cell className="w-[44px]">
        <Icon w={21} h={20}>
          <path d="M0 1h7l2 2h11v4H0z" fill="#e3a11f" /><path d="M0 4h21v15H0z" fill="#fbd668" />
          <path d="M4 19v-7c0-1 .5-1.500 1.500-1.500h10c1 0 1.500.5 1.500 1.500v7h-3.500v-3.500h-6V19z" fill="#3f98d6" />
        </Icon>
      </Cell>
      <Cell className="w-[52px] pl-[2px]">
        <Icon w={23} h={24}>
          <defs><linearGradient id="fox" x1=".8" y1="0" x2=".3" y2="1"><stop stopColor="#ffe043" /><stop offset=".5" stopColor="#ff8a1e" /><stop offset="1" stopColor="#f5285e" /></linearGradient></defs>
          <path d="M12 4c0-2 1-3 2.500-4 0 3 5.500 4 7 8 3 8-2 16-10.500 16C3 24-1 17 .5 10 1 7.500 2 5.500 4 3.500L4.500 6 8 5z" fill="url(#fox)" />
          <circle cx="11.500" cy="13" r="5" fill="#8044d8" />
          <path d="M4 8c3-2 6 0 8 2-2 0-3 1-3 2.500C7 13 5 11 4 8z" fill="#ff9b1f" />
        </Icon>
      </Cell>
      <Cell className="h-full w-[48px] border-b-2 border-[#76b9ed] bg-[#33444b]">
        <Icon w={24} h={20} className="mb-[2px]">
          <path d="M6 0h8v6H6z" fill="#21a366" /><path d="M14 0h9v6h-9z" fill="#33c481" /><path d="M6 6h8v6H6z" fill="#107c41" /><path d="M14 6h9v6h-9z" fill="#21a366" /><path d="M6 12h17v7H6z" fill="#185c37" />
          <path d="M0 5h12v13H0z" fill="#107c41" /><path d="M3.500 8l5 7M8.500 8l-5 7" stroke="#fff" strokeWidth="1.700" />
        </Icon>
      </Cell>
      <Icon w={12} h={7} className="ml-[491px]"><path d="M.5 6.500L6 1l5.500 5.500" stroke="#fff" strokeWidth="1.200" /></Icon>
      <Icon w={12} h={16} className="ml-[12px]"><path d="M1.500 4.500h6.500v7H1.500zM8 7l3-2v6L8 9M2 2c2-2 5-2 7 0M2 14c2 2 5 2 7 0" stroke="#fff" strokeWidth="1.100" /></Icon>
      <Icon w={17} h={14} className="ml-[10px]"><path d="M5 1.500h11v8H3.500V6M10 10v3M6 13.500h8M.5.500h4v5h-4z" stroke="#fff" strokeWidth="1.100" /></Icon>
      <Icon w={17} h={14} className="ml-[7px]"><path d="M.5 5v4H3l3.500 3.500v-11L3 5zM9 4.500c1.500 1.500 1.500 3.500 0 5M11.500 2.500c2.500 2.500 2.500 6.500 0 9M13.500.500c3.500 3.500 3.500 9.500 0 13" stroke="#fff" strokeWidth="1.100" /></Icon>
      <div className="ml-[8px] flex w-[53px] flex-col items-center text-[12px] leading-[18px]">
        <T w={49}>10:48 AM</T><T w={52}>3/24/2025</T>
      </div>
      <div className="relative ml-[17px] h-[24px] w-[24px]">
        <Icon w={16} h={17} className="mt-[4px]"><path d="M0 0h16v13H9.500L6 17v-4H0z" fill="#fff" /><path d="M3 3.500h10M3 6.500h10M3 9.500h7" stroke="#111" /></Icon>
        <div className="absolute left-[8px] top-[12px] flex h-[16px] w-[16px] items-center justify-center rounded-full border border-[#777] bg-[#252a32] text-[10.5px] font-bold">1</div>
      </div>
      <div className="ml-[11px] h-full w-px bg-[#555d66]" />
    </footer>
  );
}

export default function App() {
  return (
    <main className="relative flex h-[720px] w-[1280px] flex-col overflow-hidden bg-[#217346] font-['Open_Sans','Noto_Sans',sans-serif]">
      <TitleBar />
      <Tabs />
      <div className="flex h-[93px] shrink-0 bg-[#f3f3f3]">
        <Clipboard />
        <FontGroup />
        <Alignment />
        <NumberGroup />
        <Styles />
        <Cells />
        <Editing />
        <div className="flex flex-1 items-end pb-[5px] pl-[13px]">
          <Icon w={15} h={9}><path d="M1 8l6.500-6.500L14 8" stroke="#555" strokeWidth="1.300" /></Icon>
        </div>
      </div>
      <SecurityBar />
      <FormulaBar />
      <Sheet />
      <SheetTabs />
      <StatusBar />
      <Taskbar />
      <Toast />
      <Watermark />
    </main>
  );
}
